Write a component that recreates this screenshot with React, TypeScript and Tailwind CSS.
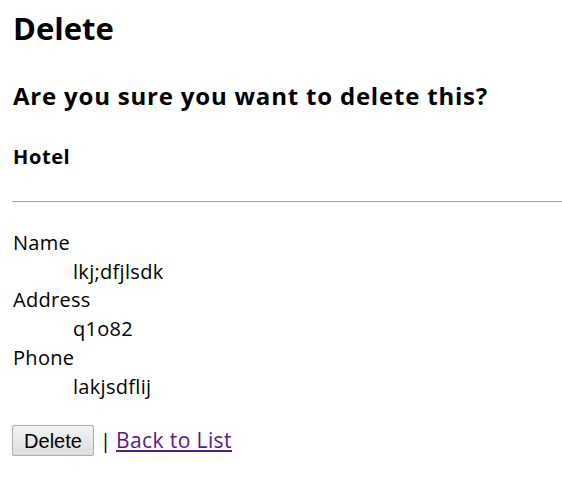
export default function App() {
  const fields = [
    { label: "Name", value: "lkj;dfjlsdk" },
    { label: "Address", value: "q1o82" },
    { label: "Phone", value: "lakjsdflij" },
  ];

  return (
    <div className="min-h-screen bg-white text-black font-['Open_Sans',sans-serif]">
      <div className="pl-[13px] pt-[7px]">
        <h1 className="text-[31px] font-bold leading-[42px]">Delete</h1>

        <h3 className="mt-[32px] text-[24px] font-bold leading-[30px] tracking-[0.8px]">
          Are you sure you want to delete this?
        </h3>

        <h4 className="mt-[32px] text-[20px] font-bold leading-[28px] tracking-[0.6px]">Hotel</h4>
      </div>

      <hr className="mt-[30px] ml-[12px] border-t border-[#a0a0a0]" />

      <dl className="pl-[13px] pt-[27px] text-[20px] leading-[28.7px] tracking-[0.3px]">
        {fields.map((f) => (
          <div key={f.label}>
            <dt>{f.label}</dt>
            <dd className="ml-[60px]">{f.value}</dd>
          </div>
        ))}
      </dl>

      <div className="flex items-center pl-[12px] mt-[24px]">
        <button className="h-[31px] w-[82px] border border-[#adadad] rounded-[2px] bg-gradient-to-b from-[#f2f2f2] to-[#dddddd] text-[20px] font-['Liberation_Sans',sans-serif]">
          Delete
        </button>
        <span className="ml-[6px] text-[20px]">|</span>
        <a href="#" className="ml-[5px] text-[21px] tracking-[0.4px] text-[#551a8b] underline">
          Back to List
        </a>
      </div>
    </div>
  );
}
